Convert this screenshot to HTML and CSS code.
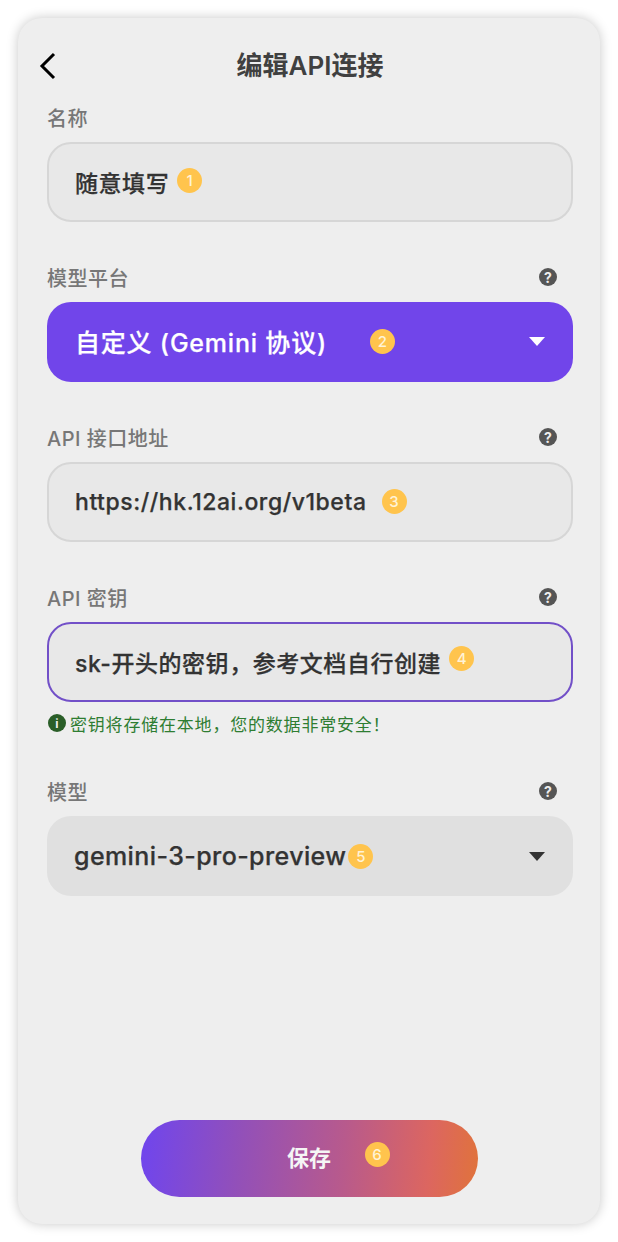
FILE: index.html
```html
<!DOCTYPE html>
<html lang="zh-CN">
<head>
    <meta charset="UTF-8">
    <title>编辑API连接</title>
    <link rel="stylesheet" href="styles.css">
</head>
<body>
    <div class="card">
        <div class="header">
            <button class="back" aria-label="返回">
                <svg width="18" height="28" viewBox="0 0 18 28"><path d="M15 2 L3 14 L15 26" fill="none" stroke="#000" stroke-width="3"/></svg>
            </button>
            <h1>编辑API连接</h1>
        </div>

        <div class="group">
            <div class="label-row"><span>名称</span></div>
            <div class="field">
                <span>随意填写</span><span class="badge b1">1</span>
            </div>
        </div>

        <div class="group">
            <div class="label-row"><span>模型平台</span><span class="help">?</span></div>
            <div class="field select purple">
                <span>自定义 (Gemini 协议)</span><span class="badge b2">2</span>
                <span class="caret"></span>
            </div>
        </div>

        <div class="group">
            <div class="label-row"><span>API 接口地址</span><span class="help">?</span></div>
            <div class="field">
                <span>https://hk.12ai.org/v1beta</span><span class="badge b3">3</span>
            </div>
        </div>

        <div class="group">
            <div class="label-row"><span>API 密钥</span><span class="help">?</span></div>
            <div class="field focus">
                <span>sk-开头的密钥，参考文档自行创建</span><span class="badge b4">4</span>
            </div>
            <div class="hint"><span class="info">i</span>密钥将存储在本地，您的数据非常安全！</div>
        </div>

        <div class="group">
            <div class="label-row"><span>模型</span><span class="help">?</span></div>
            <div class="field select grey">
                <span>gemini-3-pro-preview</span><span class="badge b5">5</span>
                <span class="caret"></span>
            </div>
        </div>

        <button class="save">保存<span class="badge b6">6</span></button>
    </div>
</body>
</html>
```

FILE: styles.css
```css
* {
    margin: 0;
    padding: 0;
    box-sizing: border-box;
}

body {
    font-family: Inter, 'Noto Sans CJK SC', sans-serif;
    background: #fff;
    height: 1242px;
    padding: 18px;
}

.card {
    height: 1206px;
    background: #eee;
    border-radius: 24px;
    padding: 28px 27px 27px 29px;
    box-shadow: 0 0 12px rgba(0, 0, 0, 0.22);
    display: flex;
    flex-direction: column;
}

.header {
    position: relative;
    height: 40px;
    margin-bottom: 19px;
    display: flex;
    align-items: center;
    justify-content: center;
}

.back {
    position: absolute;
    left: -8px;
    top: 6px;
    background: none;
    border: none;
    display: flex;
}

h1 {
    font-size: 26px;
    font-weight: 600;
    color: #404040;
    line-height: 40px;
}

.group {
    margin-bottom: 43px;
}

.label-row {
    height: 24px;
    margin-bottom: 13px;
    padding-right: 16px;
    display: flex;
    align-items: center;
    justify-content: space-between;
    font-size: 20px;
    font-weight: 500;
    letter-spacing: 0.5px;
    color: #777;
}

.help {
    width: 18px;
    height: 18px;
    border-radius: 50%;
    background: #555;
    color: #eee;
    font-size: 14px;
    font-weight: 700;
    letter-spacing: 0;
    display: flex;
    align-items: center;
    justify-content: center;
}

.field {
    height: 80px;
    border: 2px solid #d6d6d6;
    border-radius: 24px;
    background: #e8e8e8;
    padding: 0 26px;
    display: flex;
    align-items: center;
    font-size: 23px;
    font-weight: 500;
    letter-spacing: 0.55px;
    -webkit-text-stroke: 0.25px;
    color: #333;
}

.field.focus {
    border-color: #7250c8;
}

.select {
    border: none;
    padding: 0 28px 0 27px;
}

.purple {
    background: #7145ea;
    color: #fff;
    font-size: 25px;
    letter-spacing: 0.8px;
    padding: 0 28px 2px 28px;
}

.grey {
    background: #e0e0e0;
    font-size: 25px;
    letter-spacing: 0.4px;
}

.caret {
    margin-left: auto;
    width: 0;
    height: 0;
    border-left: 8px solid transparent;
    border-right: 8px solid transparent;
    border-top: 9px solid #fff;
}

.grey .caret {
    border-top-color: #333;
}

.badge {
    width: 25px;
    height: 25px;
    flex: none;
    border-radius: 50%;
    background: #ffc44d;
    color: #fff3d6;
    font-size: 15px;
    font-weight: 500;
    letter-spacing: 0;
    -webkit-text-stroke: 0;
    display: flex;
    align-items: center;
    justify-content: center;
}

.b1 { margin: -4px 0 0 8px; }
.b2 { margin-left: 43px; }
.b3 { margin: -2px 0 0 15px; }
.b4 { margin: -8px 0 0 8px; }
.b5 { margin-left: 2px; }

.hint {
    margin-top: 11px;
    margin-bottom: 3px;
    height: 20px;
    display: flex;
    align-items: center;
    font-size: 17px;
    letter-spacing: 0.8px;
    color: #2e7d32;
}

.info {
    width: 18px;
    height: 18px;
    margin: 0 4px 0 1px;
    border-radius: 50%;
    background: #2a5e28;
    color: #eee;
    font-size: 12px;
    font-weight: 700;
    letter-spacing: 0;
    display: flex;
    align-items: center;
    justify-content: center;
}

.save {
    position: relative;
    margin: auto auto 0 auto;
    left: -1px;
    width: 337px;
    height: 77px;
    border: none;
    border-radius: 39px;
    background: linear-gradient(95deg, #6f45ee 0%, #9350b8 30%, #b85a8c 60%, #dc6660 85%, #e0733b 100%);
    color: #f5f5f5;
    font-family: inherit;
    font-size: 22px;
    font-weight: 700;
    padding-bottom: 6px;
}

.b6 {
    position: absolute;
    left: 224px;
    top: 22px;
}
```
